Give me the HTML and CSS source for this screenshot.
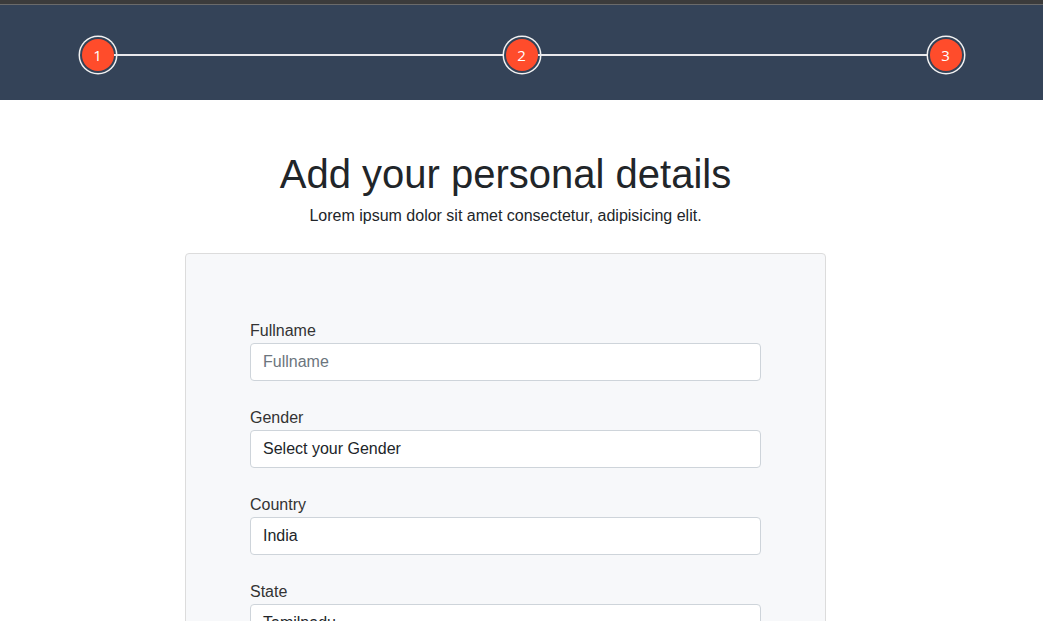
FILE: index.html
```html
<!DOCTYPE html>
<html>
<head>
<meta charset="utf-8">
<link rel="stylesheet" href="styles.css">
</head>
<body>
<div class="topbar"></div>
<header class="steps-bar">
  <div class="steps">
    <div class="step"><span>1</span></div>
    <div class="line"></div>
    <div class="step"><span>2</span></div>
    <div class="line"></div>
    <div class="step"><span>3</span></div>
  </div>
</header>
<main class="content">
  <h1 class="title">Add your personal details</h1>
  <p class="subtitle">Lorem ipsum dolor sit amet consectetur, adipisicing elit.</p>
  <form class="card">
    <div class="field">
      <label class="label">Fullname</label>
      <input class="input" type="text" placeholder="Fullname">
    </div>
    <div class="field">
      <label class="label">Gender</label>
      <div class="input">Select your Gender</div>
    </div>
    <div class="field">
      <label class="label">Country</label>
      <div class="input">India</div>
    </div>
    <div class="field">
      <label class="label">State</label>
      <div class="input">Tamilnadu</div>
    </div>
  </form>
</main>
</body>
</html>
```

FILE: styles.css
```css
html, body {
  margin: 0;
  padding: 0;
  height: 621px;
  overflow: hidden;
  background: #ffffff;
  font-family: "Liberation Sans", Arial, sans-serif;
  color: #212529;
}
.topbar {
  height: 4px;
  background: #3b3b3b;
  border-bottom: 1px solid #6a6a6a;
}
.steps-bar {
  height: 95px;
  background: #344358;
  display: flex;
  justify-content: center;
  align-items: flex-start;
}
.steps {
  display: flex;
  align-items: center;
  width: 880px;
  margin-top: 34px;
}
.step {
  width: 32px;
  height: 32px;
  flex: none;
  border-radius: 50%;
  background: #ff4c2b;
  box-shadow: 0 0 0 2px #344358, 0 0 0 3.5px #f2f2f2;
  display: flex;
  align-items: center;
  justify-content: center;
  color: #fff;
  font-family: "Open Sans", sans-serif;
  font-size: 15px;
}
.line {
  flex: 1;
  height: 2px;
  background: #e9e9ec;
  margin-top: -1px;
}
.content {
  width: 641px;
  margin-left: 185px;
  display: flex;
  flex-direction: column;
  align-items: center;
}
.title {
  margin: 50px 0 6px;
  font-size: 40px;
  font-weight: 400;
  line-height: 48px;
  color: #212529;
}
.subtitle {
  margin: 0 0 25px;
  font-size: 16px;
  line-height: 24px;
}
.card {
  box-sizing: border-box;
  width: 641px;
  background: #f7f8fa;
  border: 1px solid #dcdcdc;
  border-radius: 4px;
  padding: 65px 64px 40px;
  display: flex;
  flex-direction: column;
  gap: 25px;
}
.field {
  display: flex;
  flex-direction: column;
}
.label {
  font-size: 16px;
  line-height: 24px;
  color: #333;
}
.input {
  box-sizing: border-box;
  height: 38px;
  width: 100%;
  border: 1px solid #ced4da;
  border-radius: 4px;
  background: #fff;
  padding: 0 12px;
  font-family: "Liberation Sans", Arial, sans-serif;
  font-size: 16px;
  line-height: 36px;
  color: #212529;
  margin: 0;
}
.input::placeholder {
  color: #6c757d;
}
```
